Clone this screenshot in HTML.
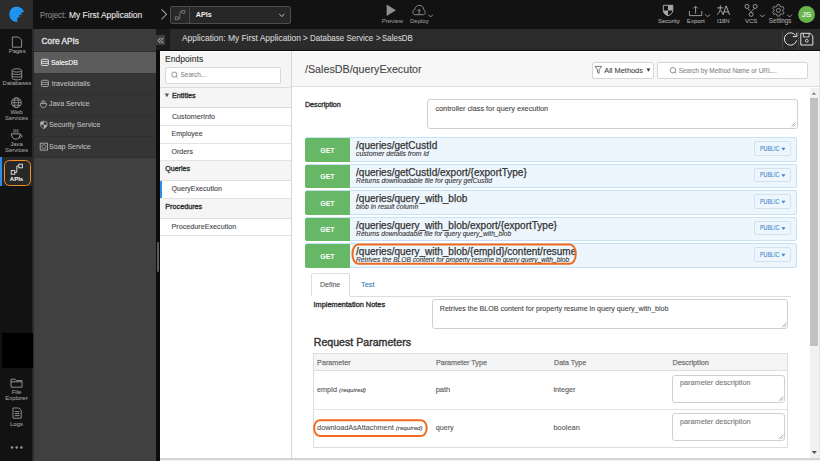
<!DOCTYPE html>
<html><head><meta charset="utf-8">
<style>
html,body{margin:0;padding:0;width:820px;height:461px;overflow:hidden;background:#fff;font-family:"Liberation Sans",sans-serif;}
.a{position:absolute;box-sizing:border-box;}
.t{position:absolute;white-space:nowrap;line-height:1;-webkit-text-stroke:0.1px currentColor;}
.t[style*="bold"]{-webkit-text-stroke:0;}
svg{position:absolute;overflow:visible;}
</style></head><body>
<!-- TOP BAR -->
<div class="a" style="left:0;top:0;width:820px;height:29px;background:#121212"></div>
<div class="a" style="left:0;top:0;width:33px;height:29px;background:#2c2c2c"></div>
<svg style="left:0;top:0" width="33" height="29" viewBox="0 0 33 29">
  <path fill="#2196f3" d="M16.2 6.7 C12.2 6.7 9.4 10.2 9.4 14.5 C9.4 18.8 12.9 22.2 17.5 22 C17.2 20.6 17.1 19.4 17.4 18.3 C18.2 17.4 19.2 17 20.1 17.1 C19.6 16.5 19.2 16.1 18.7 15.8 C19.8 14.8 21.1 14.4 22.4 14.5 C21.9 13.9 21.3 13.5 20.6 13.2 C21.7 12.3 22.8 11.9 24 11.9 C23 8.6 19.8 6.7 16.2 6.7 Z"/>
  <path fill="none" stroke="#1a7ad0" stroke-width="0.6" opacity="0.7" d="M11.6 17.6 C12.4 12.6 16.6 9.6 21.6 10.6 M13.8 19.8 C14.6 15.4 17.6 13.4 21 13.6 M15.8 21.2 C16.2 18 17.8 16.4 19.6 16.2"/>
</svg>
<div class="t" style="left:39.8px;top:10.5px;font-size:8.9px;color:#8a8a8a;transform:scaleX(0.872);transform-origin:0 0">Project:</div><div class="t" style="left:68.6px;top:10.5px;font-size:8.9px;color:#e8e8e8;transform:scaleX(0.952);transform-origin:0 0">My First Application</div>
<svg style="left:0;top:0" width="820" height="29">
  <path d="M161.5 9.3 L166.5 14.3 L161.5 19.3" fill="none" stroke="#9a9a9a" stroke-width="1.1"/>
</svg>
<div class="a" style="left:170px;top:6px;width:121px;height:18px;background:#272727;border:1px solid #4d4d4d;border-radius:2px"></div>
<div class="a" style="left:189px;top:7px;width:1px;height:16px;background:#4a4a4a"></div>
<svg style="left:0;top:0" width="820" height="29">
  <rect x="181.9" y="10.3" width="2.9" height="2.9" fill="none" stroke="#808080" stroke-width="0.8"/>
  <rect x="175.3" y="16.9" width="2.9" height="2.8" fill="none" stroke="#808080" stroke-width="0.8"/>
  <path d="M178.2 18.3 H179.9 V11.8 H181.9" fill="none" stroke="#808080" stroke-width="0.8"/>
  <path d="M279.2 13.8 L281.8 16.6 L284.4 13.8" fill="none" stroke="#cfcfcf" stroke-width="0.9"/>
</svg>
<div class="t" style="left:195.7px;top:11.3px;font-size:7.2px;font-weight:bold;color:#f0f0f0">APIs</div>

<!-- top right tools -->
<svg style="left:0;top:0" width="820" height="29">
  <!-- preview -->
  <path d="M386.6 4.4 L396 10.2 L386.6 16 Z" fill="#8f8f8f"/>
  <!-- deploy cloud -->
  <path d="M414.6 14.7 H423.4 C424.6 14.7 425.2 13.6 425.2 12.5 C425.2 11 424.4 10.2 423.9 9.8 C423.6 7.2 421.8 5.3 419.4 5.3 C416.9 5.3 415.2 7 414.9 9.2 C413.7 9.6 412.9 10.8 412.9 12.2 C412.9 13.6 413.6 14.7 414.6 14.7 Z" fill="none" stroke="#939393" stroke-width="0.9"/>
  <path d="M419.1 14.6 V9.4 M417.5 11 L419.1 9.4 L420.7 11" fill="none" stroke="#939393" stroke-width="0.9"/>
  <path d="M428.4 14.8 L430.6 17 L432.8 14.8" fill="none" stroke="#939393" stroke-width="0.9"/>
  <!-- security shield -->
  <path d="M663.3 5.3 H672.8 V10.5 C672.8 13 670.6 14.8 668 15.7 C665.4 14.8 663.3 13 663.3 10.5 Z" fill="none" stroke="#a8a8a8" stroke-width="1"/>
  <path d="M668 5.3 H672.8 V10.5 H668 Z M663.3 10.5 H668 V15.7 C665.4 14.8 663.3 13 663.3 10.5 Z" fill="#a8a8a8"/>
  <!-- export -->
  <path d="M689.4 11 V15.6 H701.8 V11" fill="none" stroke="#a6a6a6" stroke-width="0.9"/>
  <path d="M695.6 13.6 V6.2 M693.4 8.4 L695.6 6.2 L697.8 8.4" fill="none" stroke="#a6a6a6" stroke-width="0.9"/>
  <path d="M705.2 14.4 L707.6 16.8 L710 14.4" fill="none" stroke="#a6a6a6" stroke-width="0.9"/>
  <!-- vcs -->
  <circle cx="747" cy="6.4" r="2" fill="none" stroke="#a6a6a6" stroke-width="0.9"/>
  <circle cx="755.2" cy="6.4" r="2" fill="none" stroke="#a6a6a6" stroke-width="0.9"/>
  <circle cx="751.1" cy="14.4" r="2" fill="none" stroke="#a6a6a6" stroke-width="0.9"/>
  <path d="M747.6 8.3 L750.1 10.8 M754.6 8.3 L752.1 10.8 M751.1 10.8 V12.4" fill="none" stroke="#a6a6a6" stroke-width="0.9"/>
  <path d="M760 14.6 L762.4 17 L764.8 14.6" fill="none" stroke="#a6a6a6" stroke-width="0.9"/>
  <!-- settings gear -->
  <g transform="translate(778.4 10.4) scale(0.92)">
    <path d="M-1.3 -6.2 L1.3 -6.2 L1.7 -4.4 L3.2 -3.6 L4.9 -4.3 L6.2 -2.1 L4.8 -0.9 L4.8 0.9 L6.2 2.1 L4.9 4.3 L3.2 3.6 L1.7 4.4 L1.3 6.2 L-1.3 6.2 L-1.7 4.4 L-3.2 3.6 L-4.9 4.3 L-6.2 2.1 L-4.8 0.9 L-4.8 -0.9 L-6.2 -2.1 L-4.9 -4.3 L-3.2 -3.6 L-1.7 -4.4 Z" fill="none" stroke="#a6a6a6" stroke-width="0.9" stroke-linejoin="round"/>
    <circle r="2.2" fill="none" stroke="#a6a6a6" stroke-width="0.9"/>
  </g>
  <path d="M787.2 14.6 L789.6 17 L792 14.6" fill="none" stroke="#a6a6a6" stroke-width="0.9"/>
  <!-- avatar -->
  <circle cx="806.6" cy="14.5" r="8.4" fill="#6ab44d"/>
</svg>
<svg style="left:0;top:0" width="820" height="29"><path d="M717.2 7.9 H723.2 M720.3 5.2 V8.4 C720.2 11 719.2 13 717 14.6 M720.6 10.2 L723.3 14.4 M722.9 14.9 L726.2 5.8 L729.6 14.9 M724 11.9 H728.5" fill="none" stroke="#a8a8a8" stroke-width="1"/></svg>
<div class="t" style="left:381.7px;top:18.3px;font-size:6px;color:#8f8f8f">Preview</div>
<div class="t" style="left:410px;top:18.3px;font-size:6px;color:#8f8f8f">Deploy</div>
<div class="t" style="left:658px;top:18.3px;font-size:6px;color:#a2a2a2">Security</div>
<div class="t" style="left:686.8px;top:18.3px;font-size:6.2px;color:#a2a2a2">Export</div>
<div class="t" style="left:717px;top:18.3px;font-size:6px;color:#a2a2a2">I18N</div>
<div class="t" style="left:745px;top:18.3px;font-size:6px;color:#a2a2a2">VCS</div>
<div class="t" style="left:768.7px;top:18.3px;font-size:6.3px;color:#a2a2a2">Settings</div>
<div class="t" style="left:801.7px;top:11.4px;font-size:8px;color:#fff">JS</div>

<!-- LEFT RAIL -->
<div class="a" style="left:0;top:29px;width:34px;height:432px;background:#121212;border-right:2px solid #2a2a2a"></div>
<div class="a" style="left:0;top:156.8px;width:32px;height:29.4px;background:#282828"></div>
<div class="a" style="left:0;top:156.8px;width:2px;height:29.4px;background:#2d8ce8"></div>
<div class="a" style="left:4.2px;top:159.8px;width:26.6px;height:25.8px;border:1.7px solid #f39022;border-radius:5.5px"></div>
<div class="a" style="left:1.5px;top:333px;width:31.5px;height:35px;background:#000"></div>
<svg style="left:0;top:0" width="33" height="461">
  <!-- pages -->
  <path d="M12.4 37 H18.6 L21.6 40 V47.2 H12.4 Z" fill="none" stroke="#9a9a9a" stroke-width="0.9"/>
  <!-- databases -->
  <ellipse cx="16.9" cy="70.4" rx="4.8" ry="1.7" fill="none" stroke="#9a9a9a" stroke-width="0.9"/>
  <path d="M12.1 70.4 V78.2 C12.1 80.4 21.7 80.4 21.7 78.2 V70.4 M12.1 73 C12.1 75 21.7 75 21.7 73 M12.1 75.6 C12.1 77.6 21.7 77.6 21.7 75.6" fill="none" stroke="#9a9a9a" stroke-width="0.9"/>
  <!-- globe -->
  <circle cx="16.4" cy="102.7" r="4.9" fill="none" stroke="#9a9a9a" stroke-width="0.9"/>
  <ellipse cx="16.4" cy="102.7" rx="2.1" ry="4.9" fill="none" stroke="#9a9a9a" stroke-width="0.8"/>
  <path d="M11.5 102.7 H21.3 M12.2 100.2 H20.6 M12.2 105.2 H20.6" fill="none" stroke="#9a9a9a" stroke-width="0.8"/>
  <!-- java cup -->
  <path d="M11.4 133.8 H20.2 C20.2 137 18.4 139.2 15.8 139.2 C13.2 139.2 11.4 137 11.4 133.8 Z M20 134.8 C22.8 134.6 22.8 137.6 19.2 137.8" fill="none" stroke="#a6a6a6" stroke-width="0.9"/>
  <path d="M14 129.2 C13.6 130.2 14.4 131.2 14 132.6 M15.9 129.2 C15.5 130.2 16.3 131.2 15.9 132.6 M17.8 129.2 C17.4 130.2 18.2 131.2 17.8 132.6" fill="none" stroke="#a6a6a6" stroke-width="0.8"/>
  <!-- apis -->
  <rect x="18.8" y="164.2" width="3.6" height="3.6" fill="none" stroke="#e8e8e8" stroke-width="0.9"/>
  <rect x="11.2" y="170.6" width="3.6" height="3.6" fill="none" stroke="#e8e8e8" stroke-width="0.9"/>
  <path d="M14.8 172.4 H16.8 V166 H18.8" fill="none" stroke="#e8e8e8" stroke-width="0.9"/>
  <!-- folder -->
  <path d="M11 379.2 H15 L16.2 380.6 H22 V387.2 H11 Z M11 381.8 H22" fill="none" stroke="#9a9a9a" stroke-width="0.9"/>
  <!-- logs -->
  <path d="M13 408 H19 L21.2 410.2 V418.2 H13 Z M14.8 411.6 H19.4 M14.8 413.6 H19.4 M14.8 415.6 H19.4" fill="none" stroke="#9a9a9a" stroke-width="0.9"/>
  <circle cx="12" cy="447.5" r="1.2" fill="#9a9a9a"/>
  <circle cx="16.7" cy="447.5" r="1.2" fill="#9a9a9a"/>
  <circle cx="21.4" cy="447.5" r="1.2" fill="#9a9a9a"/>
</svg>
<div class="t" style="left:8.7px;top:48.1px;font-size:6px;color:#9a9a9a">Pages</div>
<div class="t" style="left:2.6px;top:80.3px;font-size:6px;color:#9a9a9a">Databases</div>
<div class="t" style="left:0;width:33px;text-align:center;top:108.8px;font-size:6px;color:#9a9a9a">Web</div>
<div class="t" style="left:0;width:33px;text-align:center;top:114.9px;font-size:6px;color:#9a9a9a">Services</div>
<div class="t" style="left:0;width:33px;text-align:center;top:140.9px;font-size:6px;color:#9a9a9a">Java</div>
<div class="t" style="left:0;width:33px;text-align:center;top:146.8px;font-size:6px;color:#9a9a9a">Services</div>
<div class="t" style="left:0;width:33px;text-align:center;top:175.6px;font-size:6px;font-weight:bold;color:#fff">APIs</div>
<div class="t" style="left:0;width:33px;text-align:center;top:389.0px;font-size:6px;color:#9a9a9a">File</div>
<div class="t" style="left:0;width:33px;text-align:center;top:395.3px;font-size:6px;color:#9a9a9a">Explorer</div>
<div class="t" style="left:0;width:33px;text-align:center;top:420.6px;font-size:6px;color:#9a9a9a">Logs</div>

<!-- SIDEBAR -->
<div class="a" style="left:34px;top:29px;width:122px;height:432px;background:#404040"></div>
<div class="a" style="left:34px;top:29px;width:122px;height:23px;background:#3b3b3b;border-bottom:1px solid #2f2f2f"></div>
<div class="t" style="left:41.6px;top:37.36px;font-size:8.3px;color:#e0e0e0;-webkit-text-stroke:0.35px #e0e0e0">Core APIs</div>
<div class="a" style="left:34px;top:52px;width:122px;height:105px;background:#353535"></div>
<div class="a" style="left:34px;top:52px;width:122px;height:21px;background:#5c5c5c"></div>
<div class="a" style="left:34px;top:93.5px;width:122px;height:1px;background:#2e2e2e"></div>
<div class="a" style="left:34px;top:114.5px;width:122px;height:1px;background:#2e2e2e"></div>
<div class="a" style="left:34px;top:135.5px;width:122px;height:1px;background:#2e2e2e"></div>
<div class="a" style="left:34px;top:156.5px;width:122px;height:1px;background:#2e2e2e"></div>
<svg style="left:0;top:0" width="160" height="200">
  <rect x="41.4" y="59.3" width="7" height="6.2" rx="1" fill="none" stroke="#e8e8e8" stroke-width="0.9"/>
  <path d="M41.4 61.4 H48.4 M41.4 63.4 H48.4" stroke="#e8e8e8" stroke-width="0.8"/>
  <rect x="41.4" y="80.3" width="7" height="6.2" rx="1" fill="none" stroke="#aaa" stroke-width="0.9"/>
  <path d="M41.4 82.4 H48.4 M41.4 84.4 H48.4" stroke="#aaa" stroke-width="0.8"/>
  <path d="M40.2 103.6 H46.6 C46.6 106 45.3 107.6 43.4 107.6 C41.5 107.6 40.2 106 40.2 103.6 Z M41 102 H45.8" fill="none" stroke="#b0b0b0" stroke-width="0.9"/>
  <path d="M42.6 100.6 H44.2" stroke="#b0b0b0" stroke-width="0.8"/>
  <path d="M40.6 122.2 C42.4 121.8 43.2 121.4 43.8 121 C44.4 121.4 45.2 121.8 47 122.2 V124.8 C47 126.6 45.6 127.8 43.8 128.6 C42 127.8 40.6 126.6 40.6 124.8 Z" fill="none" stroke="#b0b0b0" stroke-width="0.8"/>
  <path d="M40.6 122.2 C42.4 121.8 43.2 121.4 43.8 121 V124.8 H40.6 Z M43.8 124.8 H47 C47 126.6 45.6 127.8 43.8 128.6 Z" fill="#b0b0b0"/>
  <rect x="40.2" y="143.2" width="7.3" height="6.9" fill="none" stroke="#b0b0b0" stroke-width="0.9"/>
  <circle cx="43.85" cy="146.65" r="2" fill="none" stroke="#b0b0b0" stroke-width="0.7"/>
</svg>
<div class="t" style="left:51.4px;top:58.6px;font-size:7.5px;color:#fff;transform:scaleX(0.92);transform-origin:0 0">SalesDB</div>
<div class="t" style="left:51.7px;top:80.1px;font-size:7.2px;color:#bdbdbd">traveldetails</div>
<div class="t" style="left:49.1px;top:101.4px;font-size:7.1px;color:#bdbdbd">Java Service</div>
<div class="t" style="left:49.1px;top:122.4px;font-size:7.1px;color:#bdbdbd">Security Service</div>
<div class="t" style="left:49.1px;top:143.4px;font-size:7px;color:#bdbdbd">Soap Service</div>

<!-- splitter strip -->
<div class="a" style="left:156px;top:29px;width:14px;height:432px;background:#1b1b1b"></div>
<div class="a" style="left:156px;top:50px;width:4px;height:411px;background:#0c0c0c"></div>
<div class="a" style="left:156px;top:35px;width:9px;height:9.5px;background:#3c3c3c"></div>
<svg style="left:0;top:0" width="200" height="60"><path d="M160.6 37.8 L158.1 40.5 L160.6 43.2 M163.4 37.8 L160.9 40.5 L163.4 43.2" fill="none" stroke="#c8c8c8" stroke-width="1"/></svg>
<div class="a" style="left:156.7px;top:241.7px;width:2px;height:30.6px;background:#5a5a5a;border-radius:1px"></div>

<!-- BREADCRUMB -->
<div class="a" style="left:170px;top:29px;width:650px;height:21px;background:#2b2b2b"></div>
<div class="t" style="left:182.4px;top:34.3px;font-size:9px;color:#d4d4d4;transform-origin:0 0;transform:scaleX(0.936)">Application: My First Application</div><div class="t" style="left:303.3px;top:34.3px;font-size:9px;color:#d4d4d4;transform-origin:0 0;transform:scaleX(0.91)">&gt;</div><div class="t" style="left:309.7px;top:34.3px;font-size:9px;color:#d4d4d4;transform-origin:0 0;transform:scaleX(0.89)">Database Service</div><div class="t" style="left:375.8px;top:34.3px;font-size:9px;color:#d4d4d4;transform-origin:0 0;transform:scaleX(0.91)">&gt;</div><div class="t" style="left:381.5px;top:34.3px;font-size:9px;color:#d4d4d4;transform-origin:0 0;transform:scaleX(0.882)">SalesDB</div>
<div class="a" style="left:782px;top:31px;width:1px;height:18px;background:#454545"></div>
<div class="a" style="left:798px;top:31px;width:1px;height:18px;background:#454545"></div>
<svg style="left:0;top:0" width="820" height="60">
  <path d="M795.6 35.4 A6.2 6.2 0 1 0 796.6 40.4" fill="none" stroke="#e2e2e2" stroke-width="1"/>
  <path d="M792.8 36.6 L796.8 36.6 L796.8 32.8" fill="none" stroke="#e2e2e2" stroke-width="1"/>
  <path d="M800.8 33.3 H810 L812.8 36 V45 H800.8 Z" fill="none" stroke="#e0e0e0" stroke-width="1"/>
  <path d="M803.4 33.3 V37 H809 V33.3" fill="none" stroke="#e0e0e0" stroke-width="0.9"/>
  <circle cx="806.8" cy="40.8" r="1.4" fill="none" stroke="#e0e0e0" stroke-width="0.9"/>
</svg>

<!-- ENDPOINTS PANEL -->
<div class="a" style="left:160px;top:51px;width:132px;height:410px;background:#fff;border-right:1.5px solid #d6d6d6"></div>
<div class="a" style="left:160px;top:52px;width:131px;height:35.5px;background:#f5f5f5;border-bottom:1px solid #dcdcdc"></div>
<div class="a" style="left:160px;top:50px;width:660px;height:1px;background:#0c0c0c"></div>
<div class="t" style="left:165.3px;top:54.9px;font-size:9.1px;color:#333;transform:scaleX(0.945);transform-origin:0 0">Endpoints</div>
<div class="a" style="left:165.3px;top:66.5px;width:115.4px;height:17px;background:#fff;border:1px solid #d9d9d9;border-radius:2px"></div>
<svg style="left:0;top:0" width="300" height="100">
  <circle cx="174.3" cy="74.6" r="2.6" fill="none" stroke="#777" stroke-width="0.8"/>
  <path d="M176.2 76.5 L177.8 78.1" stroke="#777" stroke-width="0.8"/>
</svg>
<div class="t" style="left:180.6px;top:72.4px;font-size:6.4px;color:#8a8a8a">Search...</div>
<!-- groups -->
<div class="a" style="left:160px;top:87.5px;width:131px;height:20px;background:#f5f5f5;border-bottom:1px solid #dedede"></div>
<div class="a" style="left:160px;top:125px;width:131px;height:1px;background:#e3e3e3"></div>
<div class="a" style="left:160px;top:142.5px;width:131px;height:1px;background:#e3e3e3"></div>
<div class="a" style="left:160px;top:159.5px;width:131px;height:21px;background:#f5f5f5;border-top:1px solid #e3e3e3;border-bottom:1px solid #dedede"></div>
<div class="a" style="left:160px;top:180.5px;width:2px;height:17px;background:#2d8ce8"></div>
<div class="a" style="left:160px;top:197.5px;width:131px;height:21px;background:#f5f5f5;border-top:1px solid #e3e3e3;border-bottom:1px solid #dedede"></div>
<div class="a" style="left:160px;top:235px;width:131px;height:1px;background:#e3e3e3"></div>
<svg style="left:0;top:0" width="300" height="120">
  <path d="M164.8 93.6 H169 L166.9 97.2 Z" fill="#555"/>
</svg>
<div class="t" style="left:171.9px;top:92.45px;font-size:7.26px;color:#333;-webkit-text-stroke:0.35px #333">Entities</div>
<div class="t" style="left:171.9px;top:113px;font-size:7.2px;color:#444">CustomerInfo</div>
<div class="t" style="left:171.5px;top:130.1px;font-size:7px;color:#444">Employee</div>
<div class="t" style="left:171.5px;top:147.9px;font-size:7px;color:#444">Orders</div>
<div class="t" style="left:165.3px;top:165.3px;font-size:7.05px;color:#333;-webkit-text-stroke:0.35px #333">Queries</div>
<div class="t" style="left:171.5px;top:185.6px;font-size:7.1px;color:#444">QueryExecution</div>
<div class="t" style="left:165.3px;top:202.85px;font-size:7.23px;color:#333;-webkit-text-stroke:0.35px #333">Procedures</div>
<div class="t" style="left:171.5px;top:223.3px;font-size:7.2px;color:#444">ProcedureExecution</div>

<!-- MAIN -->
<div class="a" style="left:292px;top:51px;width:528px;height:1px;background:#fff"></div>
<div class="a" style="left:292px;top:52px;width:528px;height:35px;background:#f7f7f7;border-bottom:1px solid #dcdcdc"></div>
<div class="t" style="left:304.8px;top:64.1px;font-size:11.4px;color:#444;transform:scaleX(0.94);transform-origin:0 0">/SalesDB/queryExecutor</div>
<div class="a" style="left:592px;top:62px;width:62.3px;height:16.5px;background:#fff;border:1px solid #d6d6d6;border-radius:2px"></div>
<svg style="left:0;top:0" width="820" height="100">
  <path d="M595 66.4 H601.6 L599.1 69.6 V73.4 L597.5 72.4 V69.6 Z" fill="none" stroke="#555" stroke-width="0.8" stroke-linejoin="round"/>
  <path d="M646.5 68.6 H650.3 L648.4 71.8 Z" fill="#333"/>
</svg>
<div class="t" style="left:604.3px;top:66.8px;font-size:7.4px;color:#444">All Methods</div>
<div class="a" style="left:657.4px;top:62px;width:150.2px;height:16.5px;background:#fff;border:1px solid #d6d6d6;border-radius:2px"></div>
<div class="t" style="left:678.8px;top:67.8px;font-size:6.4px;color:#8a8a8a">Search by Method Name or URL...</div>
<svg style="left:0;top:0" width="820" height="100">  <circle cx="672.9" cy="70.2" r="2.7" fill="none" stroke="#777" stroke-width="0.8"/>
  <path d="M674.8 72.1 L676.3 73.6" stroke="#777" stroke-width="0.8"/>
</svg>

<!-- scrollbar -->
<div class="a" style="left:809.5px;top:88px;width:9px;height:371px;background:#f1f1f1"></div>
<div class="a" style="left:810.2px;top:98px;width:8px;height:247.6px;background:#c1c1c1"></div>
<svg style="left:0;top:0" width="820" height="461">
  <path d="M811.8 94.6 L813.9 92.5 L816 94.6 Z" fill="#606060"/>
  <path d="M811.8 451 L814.3 454 L816.8 451 Z" fill="#505050"/>
</svg>
<div class="a" style="left:818.5px;top:51px;width:1.5px;height:410px;background:#e6e6e6"></div>
<div class="a" style="left:160px;top:458px;width:660px;height:1.5px;background:#d4d4d4"></div><div class="a" style="left:160px;top:459.5px;width:660px;height:1.5px;background:#f4f4f4"></div>

<!-- description -->
<div class="t" style="left:304.9px;top:101.2px;font-size:7.2px;color:#333;-webkit-text-stroke:0.35px #333">Description</div>
<div class="a" style="left:427px;top:99.4px;width:370.5px;height:29.8px;background:#fff;border:1px solid #cfcfcf;border-radius:3px"></div>
<div class="t" style="left:435.4px;top:104.8px;font-size:7.3px;color:#444">controller class for query execution</div>
<svg style="left:0;top:0" width="820" height="461">
  <path d="M791.5 126.5 L795.5 122.5 M793.5 126.5 L795.5 124.5" stroke="#888" stroke-width="0.7"/>
</svg>

<!-- GET rows -->
<div class="a" style="left:304.9px;top:137.4px;width:491.8px;height:24.4px;background:#eef6fd;border:1px solid #c5e2f6;border-radius:2px"></div>
<div class="a" style="left:304.9px;top:138.2px;width:45px;height:23.6px;background:#66b866;border-radius:2px 0 0 2px"></div>
<div class="t" style="left:304.9px;width:45px;text-align:center;top:146.7px;font-size:7px;font-weight:bold;color:#fff">GET</div>
<div class="t" style="left:356.1px;top:141.2px;font-size:10px;color:#333;-webkit-text-stroke:0.25px #333">/queries/getCustId</div>
<div class="t" style="left:356.1px;top:151.1px;font-size:6.85px;font-style:italic;color:#333">customer details from id</div>
<div class="a" style="left:754.3px;top:141.1px;width:36.4px;height:14.7px;border:1px solid #d3e1ec;border-radius:2px"></div>
<div class="t" style="left:759.8px;top:145.7px;font-size:6.6px;color:#3f85cc;transform:scaleX(0.81);transform-origin:0 0">PUBLIC</div>
<svg style="left:0;top:0" width="820" height="461"><path d="M781.3 147.8 H785.5 L783.4 150.4 Z" fill="#3f85cc"/></svg>
<div class="a" style="left:304.9px;top:163.9px;width:491.8px;height:24.4px;background:#eef6fd;border:1px solid #c5e2f6;border-radius:2px"></div>
<div class="a" style="left:304.9px;top:164.7px;width:45px;height:23.6px;background:#66b866;border-radius:2px 0 0 2px"></div>
<div class="t" style="left:304.9px;width:45px;text-align:center;top:173.2px;font-size:7px;font-weight:bold;color:#fff">GET</div>
<div class="t" style="left:356.1px;top:167.7px;font-size:10px;color:#333;-webkit-text-stroke:0.25px #333">/queries/getCustId/export/{exportType}</div>
<div class="t" style="left:356.1px;top:177.7px;font-size:6.71px;font-style:italic;color:#333">Returns downloadable file for query getCustId</div>
<div class="a" style="left:754.3px;top:167.6px;width:36.4px;height:14.7px;border:1px solid #d3e1ec;border-radius:2px"></div>
<div class="t" style="left:759.8px;top:172.2px;font-size:6.6px;color:#3f85cc;transform:scaleX(0.81);transform-origin:0 0">PUBLIC</div>
<svg style="left:0;top:0" width="820" height="461"><path d="M781.3 174.3 H785.5 L783.4 176.9 Z" fill="#3f85cc"/></svg>
<div class="a" style="left:304.9px;top:190.4px;width:491.8px;height:24.4px;background:#eef6fd;border:1px solid #c5e2f6;border-radius:2px"></div>
<div class="a" style="left:304.9px;top:191.2px;width:45px;height:23.6px;background:#66b866;border-radius:2px 0 0 2px"></div>
<div class="t" style="left:304.9px;width:45px;text-align:center;top:199.7px;font-size:7px;font-weight:bold;color:#fff">GET</div>
<div class="t" style="left:356.1px;top:194.2px;font-size:10px;color:#333;-webkit-text-stroke:0.25px #333">/queries/query_with_blob</div>
<div class="t" style="left:356.1px;top:204.2px;font-size:6.78px;font-style:italic;color:#333">blob in result column</div>
<div class="a" style="left:754.3px;top:194.1px;width:36.4px;height:14.7px;border:1px solid #d3e1ec;border-radius:2px"></div>
<div class="t" style="left:759.8px;top:198.7px;font-size:6.6px;color:#3f85cc;transform:scaleX(0.81);transform-origin:0 0">PUBLIC</div>
<svg style="left:0;top:0" width="820" height="461"><path d="M781.3 200.8 H785.5 L783.4 203.4 Z" fill="#3f85cc"/></svg>
<div class="a" style="left:304.9px;top:216.9px;width:491.8px;height:24.4px;background:#eef6fd;border:1px solid #c5e2f6;border-radius:2px"></div>
<div class="a" style="left:304.9px;top:217.7px;width:45px;height:23.6px;background:#66b866;border-radius:2px 0 0 2px"></div>
<div class="t" style="left:304.9px;width:45px;text-align:center;top:226.2px;font-size:7px;font-weight:bold;color:#fff">GET</div>
<div class="t" style="left:356.1px;top:220.7px;font-size:10px;color:#333;-webkit-text-stroke:0.25px #333">/queries/query_with_blob/export/{exportType}</div>
<div class="t" style="left:356.1px;top:230.8px;font-size:6.66px;font-style:italic;color:#333">Returns downloadable file for query query_with_blob</div>
<div class="a" style="left:754.3px;top:220.6px;width:36.4px;height:14.7px;border:1px solid #d3e1ec;border-radius:2px"></div>
<div class="t" style="left:759.8px;top:225.2px;font-size:6.6px;color:#3f85cc;transform:scaleX(0.81);transform-origin:0 0">PUBLIC</div>
<svg style="left:0;top:0" width="820" height="461"><path d="M781.3 227.3 H785.5 L783.4 229.9 Z" fill="#3f85cc"/></svg>
<div class="a" style="left:304.9px;top:243.4px;width:491.8px;height:24.4px;background:#eef6fd;border:1px solid #c5e2f6;border-radius:2px"></div>
<div class="a" style="left:304.9px;top:244.2px;width:45px;height:23.6px;background:#66b866;border-radius:2px 0 0 2px"></div>
<div class="t" style="left:304.9px;width:45px;text-align:center;top:252.7px;font-size:7px;font-weight:bold;color:#fff">GET</div>
<div class="t" style="left:356.1px;top:247.2px;font-size:10px;color:#333;-webkit-text-stroke:0.25px #333">/queries/query_with_blob/{empId}/content/resume</div>
<div class="t" style="left:356.1px;top:257.3px;font-size:6.61px;font-style:italic;color:#333">Retrives the BLOB content for property resume in query query_with_blob</div>
<div class="a" style="left:754.3px;top:247.1px;width:36.4px;height:14.7px;border:1px solid #d3e1ec;border-radius:2px"></div>
<div class="t" style="left:759.8px;top:251.7px;font-size:6.6px;color:#3f85cc;transform:scaleX(0.81);transform-origin:0 0">PUBLIC</div>
<svg style="left:0;top:0" width="820" height="461"><path d="M781.3 253.8 H785.5 L783.4 256.4 Z" fill="#3f85cc"/></svg>

<!-- tabs -->
<div class="a" style="left:349.6px;top:295.5px;width:441px;height:1px;background:#dddddd"></div>
<div class="a" style="left:310.6px;top:273.3px;width:39px;height:23.2px;background:#fff;border:1px solid #dddddd;border-bottom:none;border-radius:2px 2px 0 0"></div>
<div class="t" style="left:320px;top:280.6px;font-size:7px;color:#555">Define</div>
<div class="t" style="left:361px;top:280.6px;font-size:7.4px;color:#337ab7">Test</div>
<div class="t" style="left:313.5px;top:300.77px;font-size:7.36px;color:#333;-webkit-text-stroke:0.35px #333">Implementation Notes</div>
<div class="a" style="left:432.2px;top:299.2px;width:355.6px;height:30px;background:#fff;border:1px solid #cfcfcf;border-radius:3px"></div>
<div class="t" style="left:439.8px;top:305.9px;font-size:7.1px;color:#444">Retrives the BLOB content for property resume in query query_with_blob</div>
<div class="t" style="left:313.8px;top:337.2px;font-size:10.6px;color:#333;-webkit-text-stroke:0.4px #333">Request Parameters</div>
<!-- table -->
<div class="a" style="left:313.2px;top:353.4px;width:474.8px;height:94.6px;background:#fff;border:1px solid #dddddd"></div>
<div class="a" style="left:314.2px;top:354.4px;width:472.8px;height:16.5px;background:#f5f5f5;border-bottom:1px solid #dddddd"></div>
<div class="a" style="left:314.2px;top:408.5px;width:472.8px;height:1px;background:#e3e3e3"></div>
<div class="t" style="left:317.1px;top:358.9px;font-size:7.2px;color:#777;-webkit-text-stroke:0.25px #777">Parameter</div>
<div class="t" style="left:435.9px;top:358.9px;font-size:7.2px;color:#777;-webkit-text-stroke:0.25px #777">Parameter Type</div>
<div class="t" style="left:554.1px;top:358.9px;font-size:7.05px;color:#777;-webkit-text-stroke:0.25px #777">Data Type</div>
<div class="t" style="left:672.4px;top:358.9px;font-size:7.3px;color:#777;-webkit-text-stroke:0.25px #777">Description</div>
<div class="t" style="left:317.1px;top:385.6px;font-size:7.2px;color:#555">empId <span style="font-size:6.2px;font-style:italic;color:#444">(required)</span></div>
<div class="t" style="left:435.7px;top:385.6px;font-size:7.5px;color:#555">path</div>
<div class="t" style="left:553.5px;top:385.6px;font-size:7.2px;color:#555">integer</div>
<div class="a" style="left:672.4px;top:374.6px;width:112.6px;height:28.2px;background:#fff;border:1px solid #cfcfcf;border-radius:3px"></div>
<div class="t" style="left:680px;top:379.4px;font-size:7.3px;color:#777">parameter description</div>
<div class="t" style="left:317.1px;top:424.2px;font-size:7.3px;color:#555">downloadAsAttachment <span style="font-size:6.2px;font-style:italic;color:#444">(required)</span></div>
<div class="t" style="left:435.7px;top:424.2px;font-size:7.2px;color:#555">query</div>
<div class="t" style="left:553.5px;top:424.2px;font-size:7.4px;color:#555">boolean</div>
<div class="a" style="left:672.4px;top:412.7px;width:112.6px;height:28.2px;background:#fff;border:1px solid #cfcfcf;border-radius:3px"></div>
<div class="t" style="left:680px;top:417.5px;font-size:7.3px;color:#777">parameter description</div>
<svg style="left:0;top:0" width="820" height="461">
  <path d="M782 327.2 L786.4 322.8 M784 327.2 L786.4 324.8" stroke="#888" stroke-width="0.7"/>
  <path d="M778.9 400.8 L783.2 396.5 M780.9 400.8 L783.2 398.5" stroke="#888" stroke-width="0.7"/>
  <path d="M778.9 438.9 L783.2 434.6 M780.9 438.9 L783.2 436.6" stroke="#888" stroke-width="0.7"/>
  <!-- orange ovals -->
  <rect x="352.5" y="244.4" width="223.2" height="19.4" rx="6" ry="9" fill="none" stroke="#f16b1f" stroke-width="2"/>
  <rect x="314.1" y="420.2" width="112.6" height="15.8" rx="5.5" ry="7.9" fill="none" stroke="#f16b1f" stroke-width="2"/>
</svg>

</body></html>
